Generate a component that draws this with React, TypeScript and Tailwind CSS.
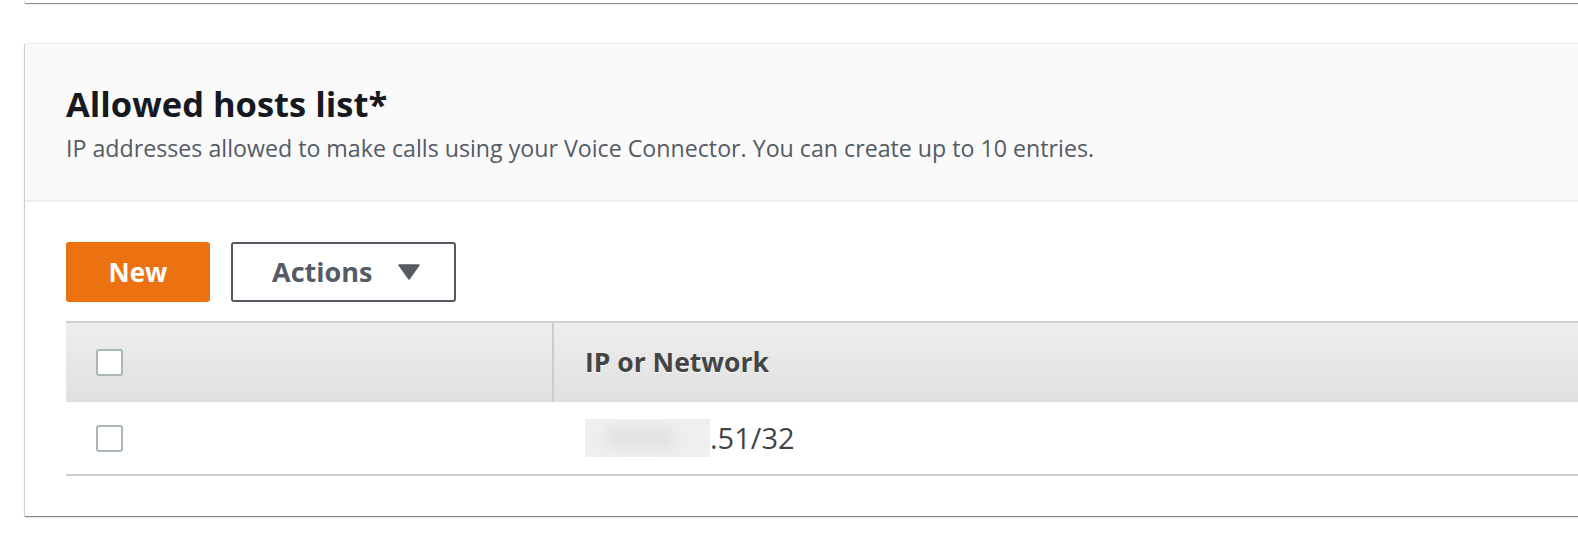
import React from "react";

function Checkbox() {
  return (
    <div className="w-[27px] h-[27px] rounded-[3px] border-2 border-[#aab7b8] bg-white" />
  );
}

export default function App() {
  const font = { fontFamily: '"Open Sans", "Noto Sans", sans-serif' };
  return (
    <div className="w-[1578px] h-[558px] overflow-hidden bg-white" style={font}>
      <div className="ml-[25px] mr-[-40px] h-[3px] bg-white shadow-[0_1px_1px_0_rgba(0,28,36,0.35),1px_1px_1px_0_rgba(0,28,36,0.15),-1px_1px_1px_0_rgba(0,28,36,0.15)]" />
      <div className="ml-[25px] mr-[-40px] mt-[40px] border-t border-[#eaeded] bg-white shadow-[0_1px_1px_0_rgba(0,28,36,0.35),1px_1px_1px_0_rgba(0,28,36,0.15),-1px_1px_1px_0_rgba(0,28,36,0.15)]">
        <div className="bg-[#fafafa] border-b-2 border-[#eaeded] pl-[41px] pt-[40px] pb-[38px]">
          <div className="text-[34.5px] leading-[40px] font-bold text-[#16191f]">
            Allowed hosts list*
          </div>
          <div className="mt-[10px] text-[23.2px] leading-[28px] text-[#545b64]">
            IP addresses allowed to make calls using your Voice Connector. You can create up to 10 entries.
          </div>
        </div>
        <div className="pl-[41px] pt-[40px] pb-[40px]">
          <div className="flex gap-[21px]">
            <div className="w-[144px] h-[60px] rounded-[3px] bg-[#ec7211] flex items-center justify-center text-white font-bold text-[26px]">
              New
            </div>
            <div className="w-[225px] h-[60px] rounded-[3px] border-2 border-[#545b64] bg-white flex items-center pl-[39px] text-[#545b64] font-bold text-[27px]">
              <span>Actions</span>
              <svg className="ml-[26px]" width="22" height="16" viewBox="0 0 22 16">
                <path d="M1 1 H21 L11 15 Z" fill="#545b64" stroke="#545b64" strokeWidth="1.5" strokeLinejoin="round" />
              </svg>
            </div>
          </div>
          <div className="mt-[19px] border-t-2 border-[#cfcfcf]">
            <div className="flex h-[79px] bg-gradient-to-b from-[#eeeeee] to-[#e0e0e0]">
              <div className="w-[488px] flex items-center pl-[30px] border-r-2 border-[#cccccc]">
                <Checkbox />
              </div>
              <div className="flex-1 flex items-center pl-[31px] text-[26.5px] font-bold text-[#444444] [text-shadow:0_1px_0_#ffffff]">
                IP or Network
              </div>
            </div>
            <div className="flex h-[74px] border-b-2 border-[#cfcfcf]">
              <div className="w-[490px] flex items-center pl-[30px]">
                <Checkbox />
              </div>
              <div className="flex-1 flex items-center pl-[29px] text-[29px] text-[#444444]">
                <div className="relative w-[125px] h-[38px] bg-[#efefef] overflow-hidden">
                  <div className="absolute left-[20px] top-[8px] w-[70px] h-[22px] rounded-full bg-[#e2e2e2] blur-[6px]" />
                </div>
                <span>.51/32</span>
              </div>
            </div>
          </div>
        </div>
      </div>
    </div>
  );
}
